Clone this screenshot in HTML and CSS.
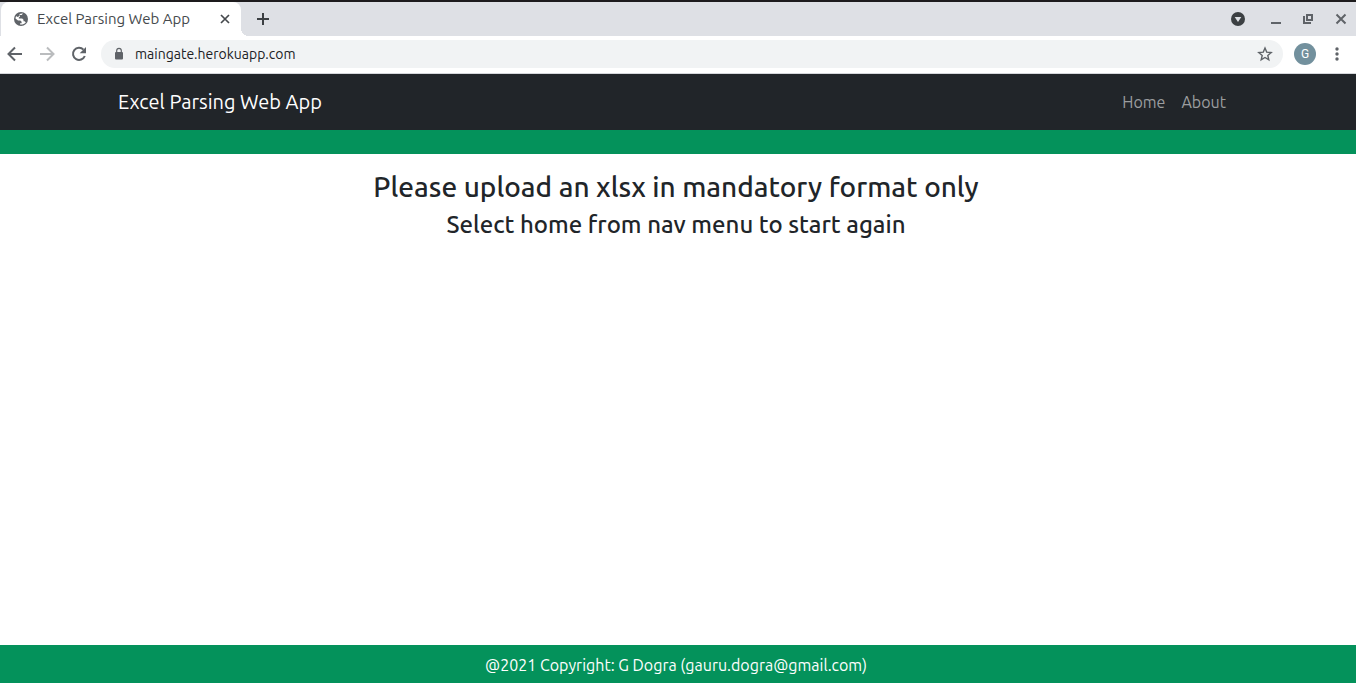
FILE: index.html
```
<!DOCTYPE html>
<html lang="en">
<head>
<meta charset="utf-8">
<title>Excel Parsing Web App</title>
<link rel="stylesheet" href="styles.css">
</head>
<body>
<div class="browser">
  <div class="tab-strip">
    <div class="tab">
      <svg class="favicon" width="16" height="16" viewBox="0 0 16 16" aria-hidden="true"><circle cx="8" cy="8" r="7" fill="#5f6368"/><path d="M10 2.500 8.700 4H7v1.500L5.800 6.600v.9h3.400l1.300 1.200v1.600h1.200l1.100 1.200c-1 1.200-2.200 1.800-3.700 2h-2v-1.300h1.500v-1.500L7.300 9.400H5L2.500 7.600c0-.9.200-1.700.6-2.400l1.500.4 1.500-1.200V3.300c1.200-.7 2.500-1 3.900-.8z" fill="#fff"/><path d="M3.200 4.800 6.300 3l.5 1.600-2 1.500z" fill="#5f6368"/></svg>
      <span class="tab-title">Excel Parsing Web App</span>
      <button class="icon-button" aria-label="Close tab"><svg width="16" height="16" viewBox="0 0 16 16"><path d="m4 4 8 8m0-8-8 8" stroke="#45494d" stroke-width="1.700"/></svg></button>
    </div>
    <button class="icon-button new-tab" aria-label="New tab"><svg width="16" height="16" viewBox="0 0 16 16"><path d="M8 2v12M2 8h12" stroke="#3c4043" stroke-width="2"/></svg></button>
    <div class="window-controls">
      <button class="icon-button" aria-label="Search tabs"><svg width="16" height="16" viewBox="0 0 16 16"><circle cx="8" cy="8" r="7" fill="#3c4043"/><path d="M4.700 6h6.600L8 11z" fill="#dee1e6"/></svg></button>
      <button class="icon-button minimize" aria-label="Minimize"><svg width="16" height="16" viewBox="0 0 16 16"><path d="M3 12h10" stroke="#5f6368" stroke-width="2"/></svg></button>
      <button class="icon-button" aria-label="Restore"><svg width="16" height="16" viewBox="0 0 16 16"><path d="M7 4h5v5H7zM4 5v7h7" fill="none" stroke="#5f6368" stroke-width="2"/></svg></button>
      <button class="icon-button" aria-label="Close window"><svg width="16" height="16" viewBox="0 0 16 16"><path d="m4.500 3.500 9 9m0-9-9 9" stroke="#5f6368" stroke-width="2"/></svg></button>
    </div>
  </div>
  <div class="toolbar">
    <button class="icon-button" aria-label="Back"><svg width="16" height="16" viewBox="0 0 16 16"><path d="M15 8H2.500M8 1.500 1.500 8 8 14.500" fill="none" stroke="#5f6368" stroke-width="2"/></svg></button>
    <button class="icon-button" aria-label="Forward" disabled><svg width="16" height="16" viewBox="0 0 16 16"><path d="M1 8h12.500M8 1.500 14.500 8 8 14.500" fill="none" stroke="#babcbe" stroke-width="2"/></svg></button>
    <button class="icon-button" aria-label="Reload"><svg width="16" height="16" viewBox="0 0 16 16"><path d="M12.500 3.600A6.100 6.100 0 1 0 13.800 10" fill="none" stroke="#5f6368" stroke-width="2"/><path d="M15 1v6.300H8.700z" fill="#5f6368"/></svg></button>
    <div class="address-bar">
      <svg width="12" height="14" viewBox="0 0 12 14" aria-hidden="true"><rect x="2" y="5" width="8" height="7.500" rx="1" fill="#5f6368"/><path d="M3.700 5.500V3.600a2.300 2.300 0 0 1 4.600 0v1.900" fill="none" stroke="#5f6368" stroke-width="1.200"/></svg>
      <input class="address" type="text" value="maingate.herokuapp.com" aria-label="Address">
      <button class="icon-button" aria-label="Bookmark"><svg width="16" height="16" viewBox="0 0 16 16"><path d="m8 2 1.700 4.100 4.500.4-3.400 2.900 1 4.400L8 11.500l-3.800 2.300 1-4.400-3.400-2.900 4.500-.4z" fill="none" stroke="#5f6368" stroke-width="1.400"/></svg></button>
    </div>
    <button class="avatar" aria-label="Profile G">G</button>
    <button class="icon-button" aria-label="Menu"><svg width="16" height="16" viewBox="0 0 16 16" fill="#5f6368"><circle cx="8" cy="3" r="1.700"/><circle cx="8" cy="8" r="1.700"/><circle cx="8" cy="13" r="1.700"/></svg></button>
  </div>
</div>
<header class="site-header">
  <nav class="container">
    <a class="brand" href="#">Excel Parsing Web App</a>
    <div class="nav-links"><a href="#">Home</a><a href="#">About</a></div>
  </nav>
</header>
<div class="band"></div>
<main class="content">
  <h1>Please upload an xlsx in mandatory format only</h1>
  <h2>Select home from nav menu to start again</h2>
</main>
<footer class="site-footer">@2021 Copyright: G Dogra (gauru.dogra@gmail.com)</footer>
</body>
</html>
```
FILE: styles.css
```
* { box-sizing: border-box; }

body {
  margin: 0;
  min-height: 100vh;
  display: flex;
  flex-direction: column;
  background: #fff;
  color: #212529;
  font: 16px/24px Ubuntu, "Noto Sans", sans-serif;
}

button, input { border: 0; padding: 0; background: none; font: inherit; color: inherit; }
a { text-decoration: none; }

.browser { border-top: 2px solid #1d1b1d; border-bottom: 1px solid #d5d7db; }
.icon-button { display: flex; flex: none; }

.tab-strip { display: flex; align-items: center; height: 34px; background: #dee0e5; }
.tab {
  display: flex;
  align-items: center;
  width: 240px;
  height: 34px;
  margin-left: 1px;
  padding: 0 8px 0 12px;
  border-radius: 8px 8px 0 0;
  background: #fff;
}
.favicon { flex: none; margin-right: 8px; }
.tab-title { flex: 1; font-size: 15px; color: #45494d; white-space: nowrap; }
.new-tab {
  align-items: center;
  height: 34px;
  padding-left: 14px;
  position: relative;
}
.new-tab::before {
  content: "";
  position: absolute;
  left: 0;
  bottom: 0;
  width: 8px;
  height: 8px;
  background: radial-gradient(circle at 100% 0, #dee0e5 8px, #fff 8px);
}
.window-controls { display: flex; gap: 16px; margin-left: auto; padding-right: 8px; }
.minimize { margin-left: 6px; }

.toolbar {
  display: flex;
  align-items: center;
  gap: 16px;
  height: 37px;
  padding: 0 11px 1px 7px;
}
.address-bar {
  display: flex;
  flex: 1;
  align-items: center;
  height: 28px;
  margin: 0 -5px 0 -2px;
  padding: 0 10px 0 12px;
  border-radius: 14px;
  background: #f1f3f4;
}
.address { flex: 1; min-width: 0; height: 24px; margin-left: 10px; font-size: 14px; color: #202124; }
.avatar {
  width: 22px;
  height: 22px;
  margin-right: -3px;
  border-radius: 50%;
  background: #72909d;
  color: #fff;
  font: 12px/22px Roboto, sans-serif;
}

.site-header { padding-right: 4px; background: #212529; }
.container {
  display: flex;
  align-items: center;
  justify-content: space-between;
  max-width: 1116px;
  height: 56px;
  margin: 0 auto;
}
.brand { color: #fff; font-size: 20px; }
.nav-links { display: flex; }
.nav-links a { padding: 8px; color: #9b9d9f; }

.band { height: 24px; background: #04925b; }
.content { flex: 1; padding: 16px 4px 0 0; text-align: center; }
h1, h2 { margin: 0; font-weight: 500; }
h1 { font-size: 28px; line-height: 34px; }
h2 { margin-top: 7px; font-size: 24px; line-height: 28px; }

.site-footer { padding: 8px 4px 6px 0; background: #04925b; color: #fff; text-align: center; }
```
